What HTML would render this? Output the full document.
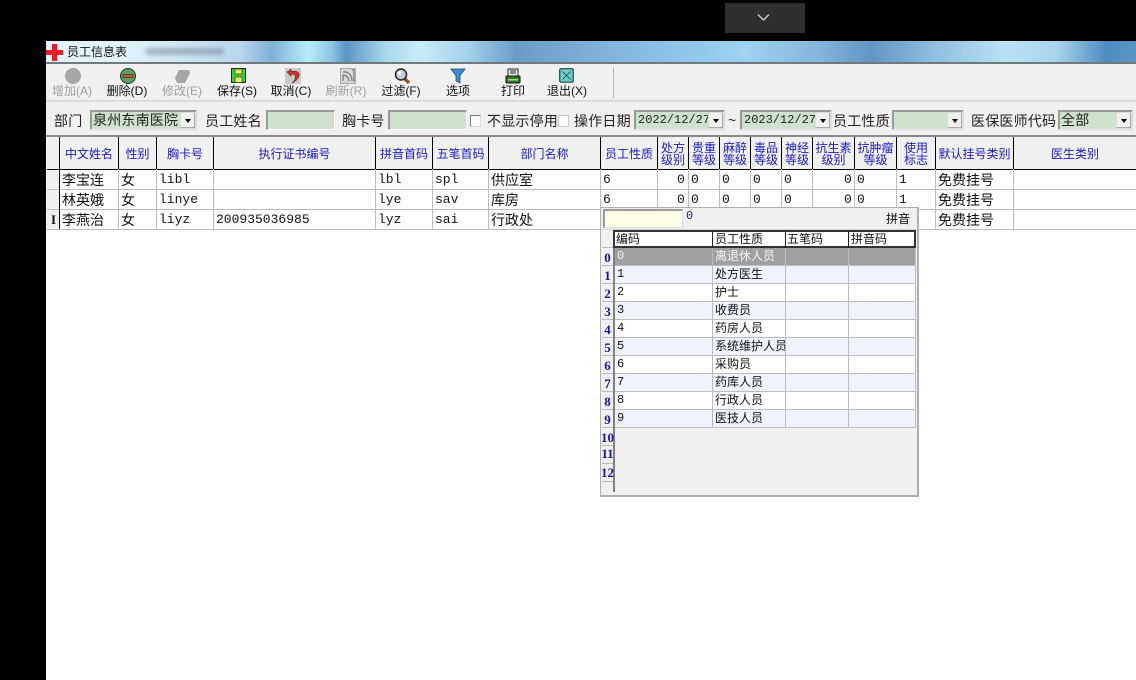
<!DOCTYPE html>
<html lang="zh"><head><meta charset="utf-8"><title>员工信息表</title>
<style>
html,body{margin:0;padding:0;width:1136px;height:680px;overflow:hidden;background:#000}
*{box-sizing:border-box}
body{font-family:"Liberation Sans","Noto Sans CJK SC",sans-serif;position:relative}
div,span,svg{position:absolute}
.t{white-space:nowrap;line-height:1}
.tb{font-size:12px;color:#111;top:84px;text-align:center;width:60px;line-height:14px;white-space:nowrap}
.tb.g{color:#a0a0a0}
.lb{font-size:14px;letter-spacing:.2px;color:#222;top:113px;line-height:16px;white-space:nowrap}
.inp{top:110px;height:20px;background:#cde3cb;border-top:2px solid #999;border-left:2px solid #999;border-right:1px solid #fff;border-bottom:1px solid #fff}
.cb{top:110px;height:20px;background:#cde3cb;border:2px solid #999;border-right-color:#ddd;border-bottom-color:#ddd;font-size:14px;letter-spacing:.2px;line-height:16px;color:#222;white-space:nowrap;overflow:hidden;padding-left:1px}
.cb.m{font-family:"Liberation Mono",monospace;font-size:12px;letter-spacing:0;padding-left:2px}
.btn{top:1px;right:0;width:15px;height:15px;background:#f0f0f0;border-left:1px solid #ddd;border-right:1px solid #aaa;border-bottom:1px solid #aaa}
.btn:after{content:"";position:absolute;left:4px;top:6px;border:3px solid transparent;border-top:4px solid #000;border-bottom:0}
.chk{width:11px;height:12px;top:115px;background:#fff;border:1px solid #777;border-right-color:#ddd;border-bottom-color:#ddd}
.h{top:137px;height:32px;padding-top:1px;color:#1a1ac8;font-size:12px;line-height:12px;text-align:center;display:flex;align-items:center;justify-content:center;white-space:nowrap}
.v{top:137px;width:1px;height:32px;background:#000}
.vr{top:169px;width:1px;height:60px;background:#bdbdbd}
.hr{left:47px;width:1089px;height:1px;background:#bdbdbd}
.c{font-size:14px;color:#111;line-height:18px;white-space:nowrap}
.m{font-family:"Liberation Mono",monospace;font-size:13px}
.pc{font-size:12px;line-height:16px;color:#111;white-space:nowrap}
.pc.m{font-size:12px}
.n{left:601px;width:13px;text-align:center;font-family:"Liberation Serif",serif;font-weight:bold;font-size:13px;line-height:14px;color:#1616a8}
</style></head>
<body>
<!-- top pull-down handle -->
<div style="left:725px;top:3px;width:80px;height:30px;background:#2f2f2f"></div>
<svg style="left:757px;top:13px" width="13" height="10" viewBox="0 0 13 10"><path d="M1 1.5 L6.5 7 L12 1.5" fill="none" stroke="#c8c8c8" stroke-width="1.5"/></svg>

<!-- window -->
<div style="left:46px;top:41px;width:1090px;height:639px;background:#fff"></div>

<!-- title bar -->
<div style="left:46px;top:41px;width:1090px;height:21px;background:linear-gradient(90deg,#e4f3fb 0,#dff2fa 75px,#cfe8f5 130px,#b9d6ec 195px,#7fb0d8 225px,#b7ecf7 262px,#8fc7e4 285px,#5c95c4 300px,#a9d8ec 340px,#c8ecf6 375px,#a5d3ec 420px,#6a9cc8 470px,#7eaed6 540px,#8cc2e8 620px,#9fd2f0 700px,#86b6dc 770px,#6396c4 825px,#90bfe0 890px,#b9e3f3 960px,#a9d4ec 1010px,#4f8cc0 1060px,#5b94c4 1090px)"></div>
<div style="left:46px;top:62px;width:1090px;height:2px;background:#6f7a7c"></div>
<div style="left:146px;top:48px;width:78px;height:7px;background:#6f7f90;opacity:.5;filter:blur(2px)"></div>
<svg style="left:46px;top:44px" width="17" height="17" viewBox="0 0 17 17"><path d="M6 0h5v6h6v5h-6v6H6v-6H0V6h6z" fill="#ec1c24"/></svg>
<div class="t" style="left:67px;top:45px;font-size:12px;line-height:14px;color:#111">员工信息表</div>

<!-- toolbar -->
<div style="left:46px;top:64px;width:1090px;height:36px;background:#f0f0f0"></div>
<div style="left:46px;top:100px;width:1090px;height:36px;background:#f0f0f0;border-top:2px solid #dcdcdc"></div>
<div style="left:613px;top:67px;width:1px;height:31px;background:#bbb"></div>

<svg style="left:65px;top:68px" width="17" height="17"><circle cx="8" cy="8" r="8" fill="#a6a6a6"/></svg>
<svg style="left:120px;top:68px" width="17" height="16"><circle cx="8" cy="8" r="7.5" fill="#5fa05f" stroke="#1c3d1c"/><rect x="3" y="6.5" width="10" height="3" fill="#c9502a" stroke="#222" stroke-width=".5"/></svg>
<svg style="left:174px;top:69px" width="17" height="15"><path d="M5 1h10l1 3-5 10H3L1 9z" fill="#a6a6a6"/></svg>
<svg style="left:231px;top:68px" width="15" height="15"><rect x=".5" y=".5" width="14" height="14" fill="#46c846" stroke="#103810"/><rect x="4" y="1" width="7" height="5" fill="#f0e850" stroke="#103810" stroke-width=".6"/><rect x="4" y="9" width="7" height="5.5" fill="#f0e850" stroke="#103810" stroke-width=".6"/></svg>
<svg style="left:285px;top:68px" width="16" height="16"><rect width="16" height="16" fill="#c8c8c8"/><path d="M2 4 L6 1 L6 3.5 C12 2 15 5 14 8 C13 12 9 14 7 15 C10 12 11 9 10 7.5 C9 6 7 6 6 6.5 L6 8.5 Z" fill="#d03030" stroke="#401010" stroke-width=".5"/></svg>
<svg style="left:340px;top:68px" width="16" height="16"><rect x=".5" y=".5" width="15" height="15" fill="#d8d8d8" stroke="#aaa"/><path d="M3 13V7M3 4c5-1 9 3 9 9M3 7c3 0 6 3 6 6M12 2h2v12" fill="none" stroke="#888" stroke-width="1.5"/></svg>
<svg style="left:394px;top:68px" width="17" height="16"><path d="M10 10l5 5" stroke="#8a5a20" stroke-width="3.4"/><circle cx="7" cy="6.5" r="5.5" fill="#c4cfe6" stroke="#222" stroke-width="1.5"/><circle cx="5.5" cy="5" r="2" fill="#fff"/></svg>
<svg style="left:450px;top:68px" width="16" height="16"><path d="M1 1h14L10 7.5V15L6 13V7.5z" fill="#3a8ed0" stroke="#1c4a70" stroke-width=".8"/></svg>
<svg style="left:505px;top:68px" width="16" height="16"><rect x="3" y="1" width="10" height="7" fill="#eee" stroke="#222"/><path d="M5 3h6M5 5h6" stroke="#222"/><rect x="1" y="8" width="14" height="7" rx="1" fill="#2f7a30" stroke="#111"/><rect x="3" y="11" width="10" height="1.5" fill="#a8e070"/></svg>
<svg style="left:559px;top:68px" width="15" height="15"><rect x=".7" y=".7" width="13.5" height="13.5" rx="1.5" fill="#68d0c8" stroke="#1e4444" stroke-width="1.2"/><path d="M3.5 3.5l8 8M11.5 3.5l-8 8" stroke="#1e4444" stroke-width=".8"/></svg>

<div class="tb g" style="left:42px">增加(A)</div>
<div class="tb" style="left:97px">删除(D)</div>
<div class="tb g" style="left:152px">修改(E)</div>
<div class="tb" style="left:207px">保存(S)</div>
<div class="tb" style="left:261px">取消(C)</div>
<div class="tb g" style="left:316px">刷新(R)</div>
<div class="tb" style="left:371px">过滤(F)</div>
<div class="tb" style="left:428px">选项</div>
<div class="tb" style="left:483px">打印</div>
<div class="tb" style="left:537px">退出(X)</div>

<!-- filter row -->
<div class="lb" style="left:54px">部门</div>
<div class="cb" style="left:90px;width:107px">泉州东南医院<span class="btn"></span></div>
<div class="lb" style="left:205px">员工姓名</div>
<div class="inp" style="left:266px;width:69px"></div>
<div class="lb" style="left:342px">胸卡号</div>
<div class="inp" style="left:388px;width:79px"></div>
<div class="chk" style="left:470px"></div>
<div class="lb" style="left:487px">不显示停用</div>
<div class="chk" style="left:558px;border-color:#ccc;background:#fff"></div>
<div class="lb" style="left:574px">操作日期</div>
<div class="cb m" style="left:634px;width:91px">2022/12/27<span class="btn"></span></div>
<div class="lb" style="left:728px;top:112px">~</div>
<div class="cb m" style="left:740px;width:92px">2023/12/27<span class="btn"></span></div>
<div class="lb" style="left:833px">员工性质</div>
<div class="cb" style="left:892px;width:72px"><span class="btn"></span></div>
<div class="lb" style="left:971px">医保医师代码</div>
<div class="cb" style="left:1058px;width:75px">全部<span class="btn"></span></div>

<!-- grid -->
<div style="left:46px;top:135px;width:1090px;height:2px;background:#8a8a8a"></div>
<div style="left:47px;top:137px;width:1089px;height:32px;background:#f0f0f0"></div>
<div style="left:47px;top:169px;width:12px;height:60px;background:#f0f0f0"></div>
<div style="left:47px;top:169px;width:1089px;height:1px;background:#000"></div>
<div class="hr" style="top:189px"></div>
<div class="hr" style="top:209px"></div>
<div class="hr" style="top:229px"></div>

<div class="v" style="left:59px"></div><div class="v" style="left:118px"></div><div class="v" style="left:156px"></div><div class="v" style="left:213px"></div><div class="v" style="left:375px"></div><div class="v" style="left:432px"></div><div class="v" style="left:488px"></div><div class="v" style="left:600px"></div><div class="v" style="left:657px"></div><div class="v" style="left:688px"></div><div class="v" style="left:719px"></div><div class="v" style="left:750px"></div><div class="v" style="left:781px"></div><div class="v" style="left:812px"></div><div class="v" style="left:854px"></div><div class="v" style="left:896px"></div><div class="v" style="left:935px"></div><div class="v" style="left:1013px"></div>
<div class="vr" style="left:59px;background:#000"></div><div class="vr" style="left:118px"></div><div class="vr" style="left:156px"></div><div class="vr" style="left:213px"></div><div class="vr" style="left:375px"></div><div class="vr" style="left:432px"></div><div class="vr" style="left:488px"></div><div class="vr" style="left:600px"></div><div class="vr" style="left:657px"></div><div class="vr" style="left:688px"></div><div class="vr" style="left:719px"></div><div class="vr" style="left:750px"></div><div class="vr" style="left:781px"></div><div class="vr" style="left:812px"></div><div class="vr" style="left:854px"></div><div class="vr" style="left:896px"></div><div class="vr" style="left:935px"></div><div class="vr" style="left:1013px"></div>

<div class="h" style="left:60px;width:58px">中文姓名</div>
<div class="h" style="left:119px;width:37px">性别</div>
<div class="h" style="left:157px;width:56px">胸卡号</div>
<div class="h" style="left:214px;width:161px">执行证书编号</div>
<div class="h" style="left:376px;width:56px">拼音首码</div>
<div class="h" style="left:433px;width:55px">五笔首码</div>
<div class="h" style="left:489px;width:111px">部门名称</div>
<div class="h" style="left:601px;width:56px">员工性质</div>
<div class="h" style="left:658px;width:30px">处方<br>级别</div>
<div class="h" style="left:689px;width:30px">贵重<br>等级</div>
<div class="h" style="left:720px;width:30px">麻醉<br>等级</div>
<div class="h" style="left:751px;width:30px">毒品<br>等级</div>
<div class="h" style="left:782px;width:30px">神经<br>等级</div>
<div class="h" style="left:813px;width:41px">抗生素<br>级别</div>
<div class="h" style="left:855px;width:41px">抗肿瘤<br>等级</div>
<div class="h" style="left:897px;width:38px">使用<br>标志</div>
<div class="h" style="left:936px;width:77px">默认挂号类别</div>
<div class="h" style="left:1014px;width:122px">医生类别</div>

<!-- row 1 -->
<div class="c" style="left:62px;top:171px">李宝连</div><div class="c" style="left:121px;top:171px">女</div><div class="c m" style="left:159px;top:171px">libl</div><div class="c m" style="left:378px;top:171px">lbl</div><div class="c m" style="left:435px;top:171px">spl</div><div class="c" style="left:491px;top:171px">供应室</div><div class="c m" style="left:603px;top:171px">6</div>
<div class="c m" style="left:677px;top:171px">0</div><div class="c m" style="left:691px;top:171px">0</div><div class="c m" style="left:722px;top:171px">0</div><div class="c m" style="left:753px;top:171px">0</div><div class="c m" style="left:784px;top:171px">0</div><div class="c m" style="left:844px;top:171px">0</div><div class="c m" style="left:857px;top:171px">0</div><div class="c m" style="left:899px;top:171px">1</div><div class="c" style="left:938px;top:171px">免费挂号</div>
<!-- row 2 -->
<div class="c" style="left:62px;top:191px">林英娥</div><div class="c" style="left:121px;top:191px">女</div><div class="c m" style="left:159px;top:191px">linye</div><div class="c m" style="left:378px;top:191px">lye</div><div class="c m" style="left:435px;top:191px">sav</div><div class="c" style="left:491px;top:191px">库房</div><div class="c m" style="left:603px;top:191px">6</div>
<div class="c m" style="left:677px;top:191px">0</div><div class="c m" style="left:691px;top:191px">0</div><div class="c m" style="left:722px;top:191px">0</div><div class="c m" style="left:753px;top:191px">0</div><div class="c m" style="left:784px;top:191px">0</div><div class="c m" style="left:844px;top:191px">0</div><div class="c m" style="left:857px;top:191px">0</div><div class="c m" style="left:899px;top:191px">1</div><div class="c" style="left:938px;top:191px">免费挂号</div>
<!-- row 3 -->
<div style="left:51px;top:213px;font:bold 13px/13px 'Liberation Serif',serif;color:#111">I</div>
<div class="c" style="left:62px;top:211px">李燕治</div><div class="c" style="left:121px;top:211px">女</div><div class="c m" style="left:159px;top:211px">liyz</div><div class="c m" style="left:216px;top:211px">200935036985</div><div class="c m" style="left:378px;top:211px">lyz</div><div class="c m" style="left:435px;top:211px">sai</div><div class="c" style="left:491px;top:211px">行政处</div><div class="c" style="left:938px;top:211px">免费挂号</div>

<!-- popup -->
<div style="left:600px;top:207px;width:319px;height:290px;background:#f0f0f0;border:1px solid #b0b0b0;border-right:2px solid #b0b0b0;border-bottom:2px solid #b0b0b0"></div>
<div style="left:603px;top:209px;width:80px;height:19px;background:#ffffe6;border-top:2px solid #999;border-left:2px solid #999;border-bottom:1px solid #ddd;border-right:1px solid #ddd"></div>
<div class="m" style="left:686px;top:209px;color:#1a1a90;font-size:12px;line-height:14px">0</div>
<div class="t" style="left:886px;top:212px;font-size:12px;line-height:14px;color:#111">拼音</div>
<div style="left:601px;top:229px;width:316px;height:1px;background:#d4d4d4"></div>

<div style="left:613px;top:231px;width:2px;height:261px;background:#808080"></div>
<div style="left:613px;top:230px;width:303px;height:18px;background:#fff;border:2px solid #333"></div>
<div style="left:712px;top:231px;width:1px;height:17px;background:#222"></div><div style="left:785px;top:231px;width:1px;height:17px;background:#222"></div><div style="left:848px;top:231px;width:1px;height:17px;background:#222"></div>
<div class="pc" style="left:616px;top:231px">编码</div><div class="pc" style="left:715px;top:231px">员工性质</div><div class="pc" style="left:787px;top:231px">五笔码</div><div class="pc" style="left:851px;top:231px">拼音码</div>

<div style="left:615px;top:248px;width:301px;height:18px;background:#a0a0a0"></div>
<div style="left:615px;top:266px;width:301px;height:18px;background:#eff3fc"></div>
<div style="left:615px;top:284px;width:301px;height:18px;background:#fff"></div>
<div style="left:615px;top:302px;width:301px;height:18px;background:#eff3fc"></div>
<div style="left:615px;top:320px;width:301px;height:18px;background:#fff"></div>
<div style="left:615px;top:338px;width:301px;height:18px;background:#eff3fc"></div>
<div style="left:615px;top:356px;width:301px;height:18px;background:#fff"></div>
<div style="left:615px;top:374px;width:301px;height:18px;background:#eff3fc"></div>
<div style="left:615px;top:392px;width:301px;height:18px;background:#fff"></div>
<div style="left:615px;top:410px;width:301px;height:18px;background:#eff3fc"></div>

<div style="left:615px;top:265px;width:301px;height:1px;background:#bcbcbc"></div><div style="left:615px;top:283px;width:301px;height:1px;background:#bcbcbc"></div><div style="left:615px;top:301px;width:301px;height:1px;background:#bcbcbc"></div><div style="left:615px;top:319px;width:301px;height:1px;background:#bcbcbc"></div><div style="left:615px;top:337px;width:301px;height:1px;background:#bcbcbc"></div><div style="left:615px;top:355px;width:301px;height:1px;background:#bcbcbc"></div><div style="left:615px;top:373px;width:301px;height:1px;background:#bcbcbc"></div><div style="left:615px;top:391px;width:301px;height:1px;background:#bcbcbc"></div><div style="left:615px;top:409px;width:301px;height:1px;background:#bcbcbc"></div><div style="left:615px;top:427px;width:301px;height:1px;background:#bcbcbc"></div>
<div style="left:712px;top:248px;width:1px;height:180px;background:#bcbcbc"></div><div style="left:785px;top:248px;width:1px;height:180px;background:#bcbcbc"></div><div style="left:848px;top:248px;width:1px;height:180px;background:#bcbcbc"></div><div style="left:915px;top:248px;width:1px;height:180px;background:#bcbcbc"></div>

<div class="pc m" style="left:617px;top:248px;color:#eee">0</div><div class="pc" style="left:715px;top:248px;color:#f4f4f4">离退休人员</div>
<div class="pc m" style="left:617px;top:266px">1</div><div class="pc" style="left:715px;top:266px">处方医生</div>
<div class="pc m" style="left:617px;top:284px">2</div><div class="pc" style="left:715px;top:284px">护士</div>
<div class="pc m" style="left:617px;top:302px">3</div><div class="pc" style="left:715px;top:302px">收费员</div>
<div class="pc m" style="left:617px;top:320px">4</div><div class="pc" style="left:715px;top:320px">药房人员</div>
<div class="pc m" style="left:617px;top:338px">5</div><div class="pc" style="left:715px;top:338px;width:70px;overflow:hidden">系统维护人员</div>
<div class="pc m" style="left:617px;top:356px">6</div><div class="pc" style="left:715px;top:356px">采购员</div>
<div class="pc m" style="left:617px;top:374px">7</div><div class="pc" style="left:715px;top:374px">药库人员</div>
<div class="pc m" style="left:617px;top:392px">8</div><div class="pc" style="left:715px;top:392px">行政人员</div>
<div class="pc m" style="left:617px;top:410px">9</div><div class="pc" style="left:715px;top:410px">医技人员</div>

<div class="n" style="top:251px">0</div><div class="n" style="top:269px">1</div><div class="n" style="top:287px">2</div><div class="n" style="top:305px">3</div><div class="n" style="top:323px">4</div><div class="n" style="top:341px">5</div><div class="n" style="top:359px">6</div><div class="n" style="top:377px">7</div><div class="n" style="top:395px">8</div><div class="n" style="top:413px">9</div><div class="n" style="top:431px">10</div><div class="n" style="top:447px">11</div><div class="n" style="top:466px">12</div>
<div style="left:602px;top:247px;width:11px;height:1px;background:#bbb"></div><div style="left:602px;top:265px;width:11px;height:1px;background:#bbb"></div><div style="left:602px;top:283px;width:11px;height:1px;background:#bbb"></div><div style="left:602px;top:301px;width:11px;height:1px;background:#bbb"></div><div style="left:602px;top:319px;width:11px;height:1px;background:#bbb"></div><div style="left:602px;top:337px;width:11px;height:1px;background:#bbb"></div><div style="left:602px;top:355px;width:11px;height:1px;background:#bbb"></div><div style="left:602px;top:373px;width:11px;height:1px;background:#bbb"></div><div style="left:602px;top:391px;width:11px;height:1px;background:#bbb"></div><div style="left:602px;top:409px;width:11px;height:1px;background:#bbb"></div><div style="left:602px;top:427px;width:11px;height:1px;background:#bbb"></div><div style="left:602px;top:445px;width:11px;height:1px;background:#bbb"></div><div style="left:602px;top:463px;width:11px;height:1px;background:#bbb"></div><div style="left:602px;top:481px;width:11px;height:1px;background:#bbb"></div>
</body></html>
